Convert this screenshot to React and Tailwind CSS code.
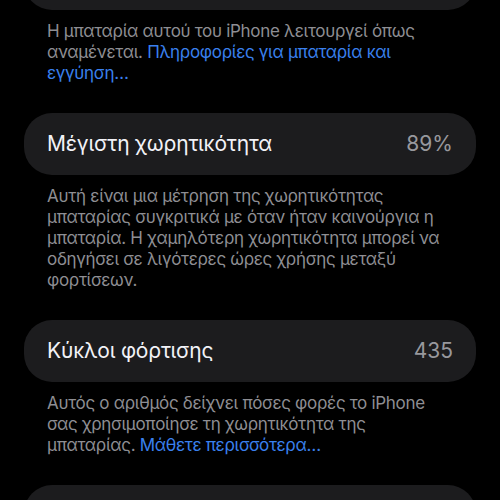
import React from 'react'

const Row = ({ label, value }) => (
    <div className="flex h-[62px] items-center justify-between rounded-[28px] bg-[#1c1c1e] px-[23px]">
        <span className="text-[21px] tracking-[-0.2px] text-[#f2f2f7]">{label}</span>
        <span className="text-[21px] text-[#98989d]">{value}</span>
    </div>
)

const Footer = ({ children }) => (
    <p className="mt-[11px] mb-[29px] px-[23px] text-[17px] leading-[21px] tracking-[-0.3px] text-[#8e8e93]">
        {children}
    </p>
)

const Link = ({ children }) => <span className="text-[#3a80ee]">{children}</span>

export default function App() {
    return (
        <div className="h-[500px] w-[500px] overflow-hidden bg-black" style={{ fontFamily: 'Inter, "Noto Sans", sans-serif' }}>
            <div className="px-6">
                <div className="-mt-[52px] h-[62px] rounded-[28px] bg-[#1c1c1e]" />
                <Footer>
                    Η μπαταρία αυτού του iPhone λειτουργεί όπως αναμένεται. <Link>Πληροφορίες για μπαταρία και εγγύηση…</Link>
                </Footer>

                <Row label="Μέγιστη χωρητικότητα" value="89%" />
                <Footer>
                    Αυτή είναι μια μέτρηση της χωρητικότητας μπαταρίας συγκριτικά με όταν ήταν καινούργια η μπαταρία. Η χαμηλότερη χωρητικότητα μπορεί να οδηγήσει σε λιγότερες ώρες χρήσης μεταξύ φορτίσεων.
                </Footer>

                <Row label="Κύκλοι φόρτισης" value="435" />
                <Footer>
                    Αυτός ο αριθμός δείχνει πόσες φορές το iPhone σας χρησιμοποίησε τη χωρητικότητα της μπαταρίας. <Link>Μάθετε περισσότερα…</Link>
                </Footer>

                <div className="h-[62px] rounded-[28px] bg-[#1c1c1e]" />
            </div>
        </div>
    )
}
